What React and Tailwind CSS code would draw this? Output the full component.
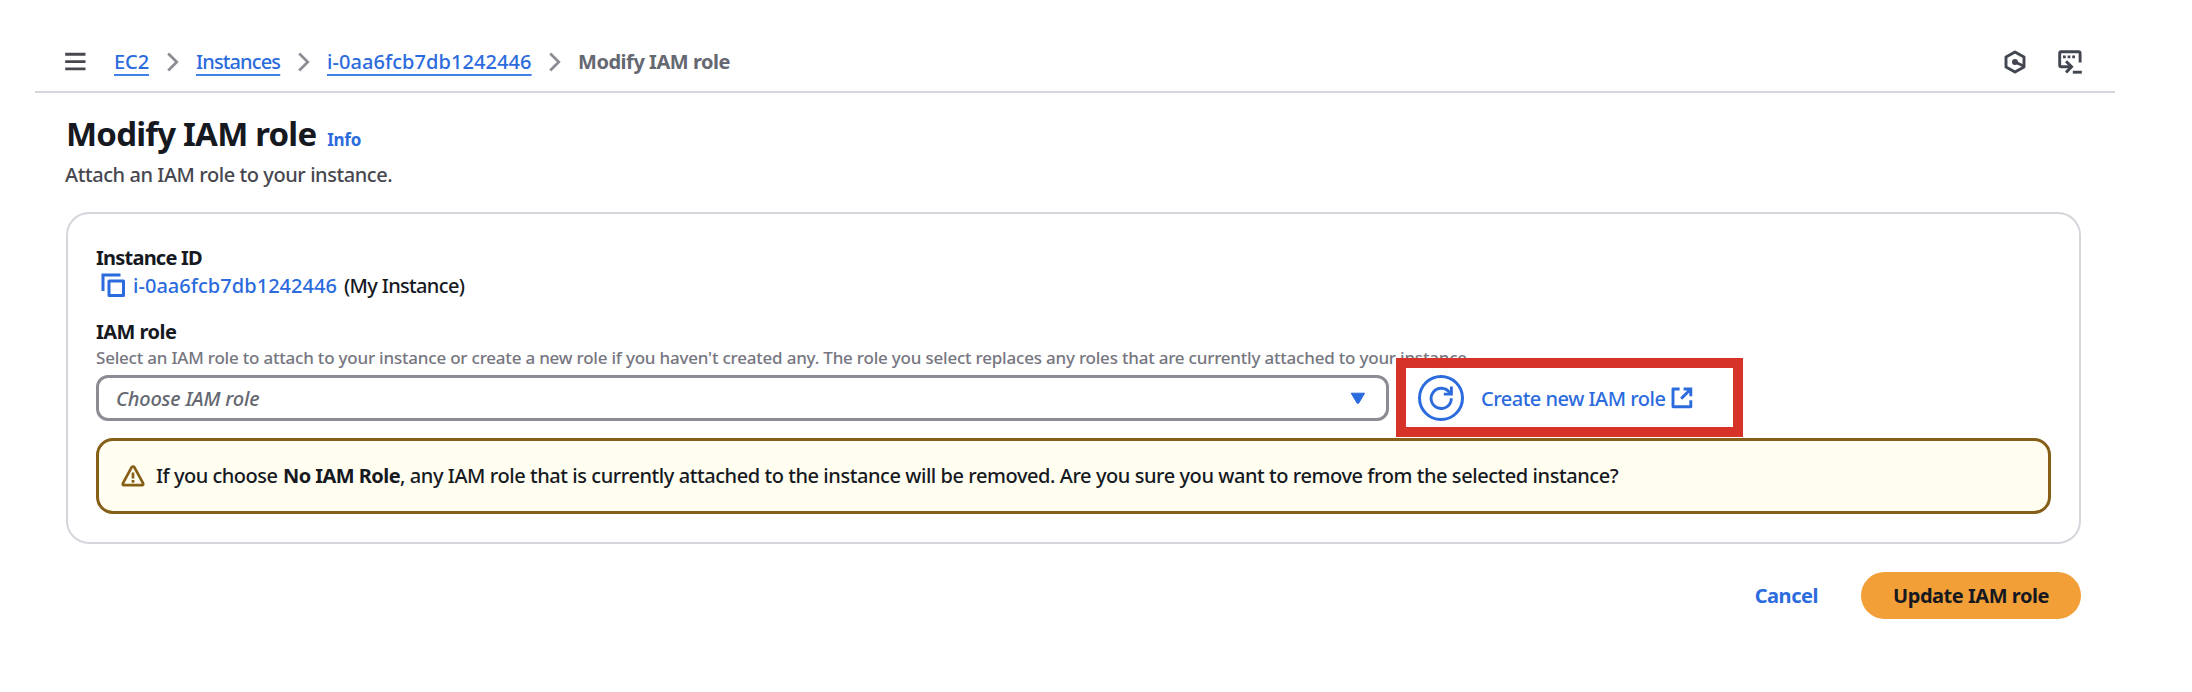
import React from "react";

const MenuIcon = () => (
  <svg width="22" height="22" viewBox="0 0 22 22" fill="none" stroke="#47474f" strokeWidth="2.9">
    <path d="M0.2 3.3h20.3M0.2 10.6h20.3M0.2 17.9h20.3" />
  </svg>
);

const Chevron = () => (
  <svg width="12" height="20" viewBox="0 0 12 20" fill="none" stroke="#8c8c94" strokeWidth="2.7">
    <path d="M1.2 1.5l8.6 8.5-8.6 8.5" />
  </svg>
);

const HexagonIcon = () => (
  <svg width="22" height="24" viewBox="0 0 22 24" fill="none" stroke="#424650" strokeWidth="2.9" strokeLinejoin="round">
    <path d="M11 2l9 5.1v9.8L11 22l-9-5.1V7.1z" />
    <path d="M11 12l8.5 4" />
    <circle cx="11" cy="12" r="3" fill="#424650" stroke="none" />
  </svg>
);

const ShellIcon = () => (
  <svg width="24" height="24" viewBox="0 0 24 24" fill="none" stroke="#424650" strokeWidth="2.9">
    <path d="M22.1 12.5V3.2q0-1.5-1.5-1.5H3.2q-1.5 0-1.5 1.5v12q0 1.6 1.5 1.6H13.5" />
    <path d="M8 11.2l5.6 5.6L8 22.4" />
    <path d="M14.8 22.2h9" />
    <path d="M5 6.9h2.8M9.6 6.9h2.8M14.2 6.9h2.8" />
  </svg>
);

const CopyIcon = () => (
  <svg width="24" height="24" viewBox="0 0 24 24" fill="none" stroke="#2b6bdd" strokeWidth="3">
    <path d="M2 18V2h17.5" />
    <path d="M8 8h14.5v14.5H8z" strokeLinejoin="round" />
  </svg>
);

const CaretIcon = () => (
  <svg width="16" height="13" viewBox="0 0 16 13" fill="#2b6bdd" stroke="#2b6bdd" strokeLinejoin="round">
    <path d="M1.2 1.2h13.4L8.7 11.2H7.1z" />
  </svg>
);

const RefreshIcon = () => (
  <svg width="24" height="24" viewBox="0 0 24 24" fill="none" stroke="#2b6bdd" strokeWidth="2.9">
    <path d="M22.3 12.3A10.1 10.1 0 1 1 20.6 6.8" />
    <path d="M14.8 8.1h7.6V0.6" />
  </svg>
);

const ExternalIcon = () => (
  <svg width="22" height="22" viewBox="0 0 22 22" fill="none" stroke="#2b6bdd" strokeWidth="2.9">
    <path d="M8.6 2H2v17.8h17.8v-6.6" strokeLinejoin="round" />
    <path d="M12.6 2h7.2v7.2M19.6 2.2l-9.4 9.4" />
  </svg>
);

const WarningIcon = () => (
  <svg width="24" height="22" viewBox="0 0 24 22" fill="none" stroke="#855f17" strokeWidth="2.7" strokeLinejoin="round">
    <path d="M10.7 2.2L2 18.2q-0.9 2 1.2 2h17.6q2.1 0 1.2-2L13.3 2.2q-1.3-1.4-2.6 0z" />
    <path d="M12 7.6v5.8M12 15v2.8" />
  </svg>
);

const Crumb = ({ children, className }) => (
  <a className={`text-[#2b6bdd] underline decoration-2 underline-offset-[5px] decoration-[#3f82e6] [text-decoration-skip-ink:none] ${className}`}>{children}</a>
);

export default function App() {
  return (
    <div className="h-[692px] w-[2192px] overflow-hidden bg-white pt-8 font-['Noto_Sans',sans-serif] text-[20px] leading-6 font-medium whitespace-nowrap text-[#16191f]">
      <header className="ml-[35px] flex h-[61px] w-[2080px] items-center border-b-2 border-[#d5d5dc] pl-[30px]">
        <MenuIcon />
        <nav className="ml-[27px] flex items-center">
          <Crumb className="w-[35px] tracking-[-0.1px]">EC2</Crumb>
          <span className="ml-[18px]"><Chevron /></span>
          <Crumb className="ml-[17px] w-[84px] tracking-[-0.865px]">Instances</Crumb>
          <span className="ml-[18px]"><Chevron /></span>
          <Crumb className="ml-[17px] w-[205px] tracking-[0.07px]">i-0aa6fcb7db1242446</Crumb>
          <span className="ml-[17px]"><Chevron /></span>
          <span className="ml-[17px] font-bold tracking-[-0.465px] text-[#656871]">Modify IAM role</span>
        </nav>
        <div className="mr-[33px] ml-auto flex items-center gap-8">
          <HexagonIcon />
          <ShellIcon />
        </div>
      </header>

      <main className="mt-[21px] ml-[66px] w-[2015px]">
        <div className="flex h-10 items-baseline">
          <h1 className="text-[33px] leading-10 font-bold tracking-[-0.8px]">Modify IAM role</h1>
          <a className="ml-[11px] text-[17px] font-bold tracking-[-0.3px] text-[#2b6bdd]">Info</a>
        </div>
        <p className="mt-[9px] -ml-px tracking-[-0.43px] text-[#47474f]">Attach an IAM role to your instance.</p>

        <section className="mt-[25px] h-[332px] rounded-[23px] border-2 border-[#d5d5dc] pt-[32px] pr-[28px] pl-[28px]">
          <h2 className="font-bold tracking-[-0.77px]">Instance ID</h2>
          <div className="mt-[3px] flex h-6 items-center">
            <span className="ml-[5px]"><CopyIcon /></span>
            <a className="mt-px ml-[8px] w-[211px] tracking-[0.04px] text-[#2b6bdd]">i-0aa6fcb7db1242446</a>
            <span className="mt-px tracking-[-0.66px]">(My Instance)</span>
          </div>

          <h2 className="mt-[23px] font-bold tracking-[-0.53px]">IAM role</h2>
          <p className="mt-1 text-[17px] leading-5 tracking-[-0.21px] text-[#76767f]">
            Select an IAM role to attach to your instance or create a new role if you haven't created any. The role you select replaces any roles that are currently attached to your instance.
          </p>

          <div className="relative mt-[7px] flex h-[46px] items-center">
            <div className="flex h-[46px] w-[1293px] items-center justify-between rounded-[12px] border-[3px] border-[#8c8c94] pr-[20px] pl-[17px]">
              <span className="mt-px tracking-[-0.2px] text-[#656871] italic">Choose IAM role</span>
              <CaretIcon />
            </div>
            <button className="ml-[29px] flex size-[46px] items-center justify-center rounded-full border-[3px] border-[#2b6bdd]">
              <RefreshIcon />
            </button>
            <a className="ml-[17px] flex items-center text-[#2b6bdd]">
              <span className="mt-0.5 w-[190px] tracking-[-0.5px]">Create new IAM role</span>
              <ExternalIcon />
            </a>
            <div className="absolute -top-[17px] left-[1300px] h-[79px] w-[347px] border-[10.5px] border-[#d63228]" />
          </div>

          <div className="mt-[17px] flex h-[76px] w-[1955px] items-center rounded-[17px] border-[3px] border-[#855f17] bg-[#fffef0] pl-[22px]">
            <WarningIcon />
            <p className="ml-[11px] flex">
              <span className="w-[127px] tracking-[-0.5px]">If you choose</span>
              <b className="w-[117px] tracking-[-0.55px]">No IAM Role</b>
              <span className="tracking-[-0.435px]">, any IAM role that is currently attached to the instance will be removed. Are you sure you want to remove from the selected instance?</span>
            </p>
          </div>
        </section>

        <div className="mt-7 flex h-[47px] items-center justify-end font-bold">
          <button className="mr-[43px] tracking-[-0.45px] text-[#2b6bdd]">Cancel</button>
          <button className="h-[47px] w-[220px] rounded-full bg-[#f29f38] tracking-[-0.47px] text-[#16191f]">Update IAM role</button>
        </div>
      </main>
    </div>
  );
}
